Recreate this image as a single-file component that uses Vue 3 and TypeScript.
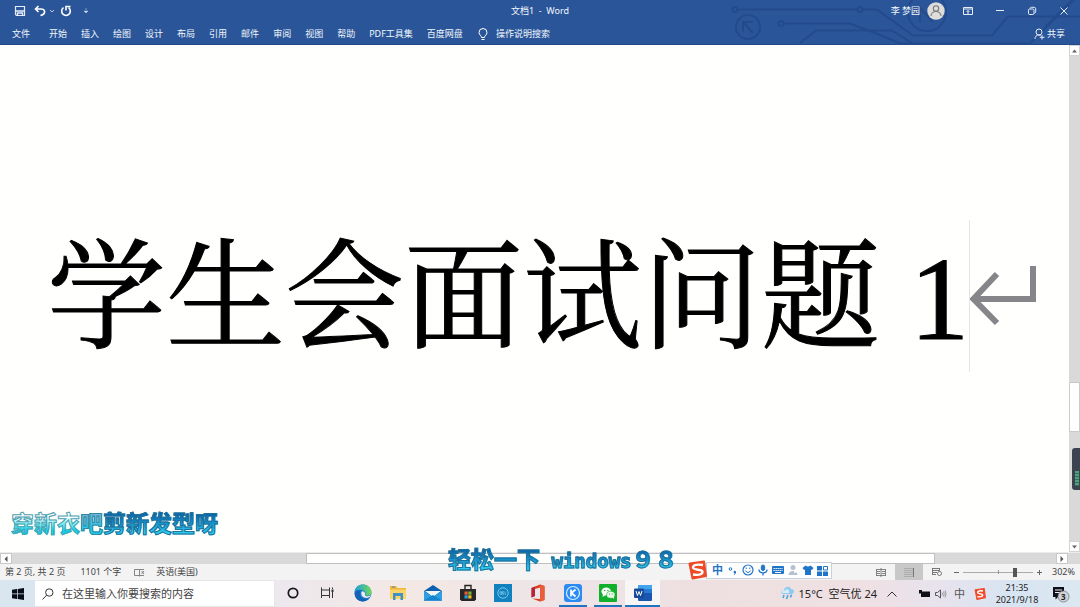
<script setup lang="ts">
import { ref } from 'vue'

const tabs: string[] = ['开始', '插入', '绘图', '设计', '布局', '引用', '邮件', '审阅', '视图', '帮助', 'PDF工具集', '百度网盘']
const zoom = ref(76)
const query = ref('')
</script>

<template>
  <div class="desktop">
    <header class="top">
      <svg class="circuit" viewBox="0 0 360 45" fill="none" stroke="#234a8c" stroke-width="2">
        <path d="M18 9.500H137M143 9.500H157L193 35.500H272L288 16.500H360M64 23.500H130L160 35L180 43.500H310L360 -6M80 43L96 30.500H172L192 43M325 27L352 0" />
        <circle cx="15" cy="9.500" r="2.500" /><circle cx="140" cy="9.500" r="2.500" /><circle cx="61" cy="23.500" r="2.500" />
        <circle cx="28" cy="27" r="12" /><path d="M23 32V22H33M23 22L33 33" />
        <circle cx="207" cy="12" r="19" /><path d="M200 22V8L213 22" />
      </svg>
      <div class="titlebar">
        <div class="quick">
          <button aria-label="保存"><svg width="12" height="12" viewBox="0 0 12 12"><path d="M1.500 1.500H10.500V10.500H2.500L1.500 9.500Z" fill="none" stroke="#e6edf8" stroke-width="1.200" /><path d="M2 6H10M3.500 10V8H8.500V10" fill="none" stroke="#e6edf8" stroke-width="1.400" /></svg></button>
          <button class="undo" aria-label="撤消"><svg width="12" height="12" viewBox="0 0 12 12" fill="none" stroke="#fff" stroke-width="1.600"><path d="M4.500 1L1.500 4L4.500 7M1.500 4H7.500C10 4 11 6 10.500 7.500C10 9.500 8.500 10 6.500 10.500" /></svg></button>
          <button class="more" aria-label="撤消选项"><svg width="4" height="4" viewBox="0 0 4 4"><path d="M0 1L2 3L4 1" fill="none" stroke="#b9cae6" /></svg></button>
          <button class="redo" aria-label="重复"><svg width="12" height="12" viewBox="0 0 12 12" fill="none" stroke="#fff" stroke-width="1.600"><path d="M3.500 2.700A4.300 4.300 0 1 0 8.500 2.700M6 5.500V1.500H10.500" /></svg></button>
          <button class="custom" aria-label="自定义快速访问工具栏"><svg width="4" height="6" viewBox="0 0 4 6"><path d="M1 1H3M0 3H4L2 5Z" fill="#c9d7ee" stroke="#c9d7ee" stroke-width=".5" /></svg></button>
        </div>
        <div class="doc-name">文档1&nbsp; -&nbsp; Word</div>
        <div class="account">
          <span>李 梦园</span>
          <svg width="18" height="18" viewBox="0 0 18 18"><circle cx="9" cy="9" r="8.700" fill="#dfddda" /><circle cx="9" cy="6.500" r="2.700" fill="none" stroke="#77797c" stroke-width="1.100" /><path d="M4 14C4 8 14 8 14 14" fill="none" stroke="#77797c" stroke-width="1.100" /></svg>
        </div>
        <div class="window-buttons">
          <button aria-label="功能区显示选项"><svg width="12" height="10" viewBox="0 0 12 10" fill="none" stroke="#e6edf8"><path d="M1.500 1.500H10.500V8.500H1.500ZM1.500 3H10.500M6 8V4.500M4.500 6L6 4.500L7.500 6" /></svg></button>
          <button aria-label="最小化"><svg width="10" height="10" viewBox="0 0 10 10"><path d="M1 4.500H9" stroke="#e6edf8" /></svg></button>
          <button aria-label="还原"><svg width="10" height="10" viewBox="0 0 10 10" fill="none" stroke="#e6edf8"><rect x="1.500" y="3" width="5.500" height="5.500" rx="1.200" /><path d="M3 2.500C3.200 1.500 3.600 1.300 4.500 1.300H7C8.300 1.300 8.700 2 8.700 3V5.500C8.700 6.500 8.400 7 7.500 7.200" /></svg></button>
          <button aria-label="关闭"><svg width="10" height="10" viewBox="0 0 10 10"><path d="M1.500 1.500L8.500 8.500M8.500 1.500L1.500 8.500" stroke="#e6edf8" /></svg></button>
        </div>
      </div>
      <nav class="ribbon">
        <button class="file">文件</button>
        <button v-for="tab in tabs" :key="tab">{{ tab }}</button>
        <button class="tell">
          <svg width="10" height="13" viewBox="0 0 10 13" fill="none" stroke="#fff"><path d="M3.500 9.500C3.500 7.500 1 7 1 4.500A4 4 0 0 1 9 4.500C9 7 6.500 7.500 6.500 9.500ZM3.500 11.500H6.500" /></svg>
          操作说明搜索
        </button>
        <button class="share">
          <svg width="11" height="12" viewBox="0 0 11 12" fill="none" stroke="#e6edf8"><circle cx="5" cy="4" r="3" /><path d="M1 11C1 8.500 2.500 7 5 7L6.500 7.500M8 7V11.500M5.800 9.300H10.500" /></svg>
          共享
        </button>
      </nav>
    </header>

    <div class="workspace">
      <main class="page">
        <h1>学生会面试问题 1</h1>
        <span class="caret"></span>
        <svg class="return" width="67" height="62" viewBox="0 0 67 62" fill="none" stroke="#85858a" stroke-width="6"><path d="M63 1V34H4M27 9L3.500 34L27 58" /></svg>
      </main>
      <div class="vscroll">
        <button aria-label="向上滚动"><svg width="5" height="4" viewBox="0 0 5 4"><path d="M0 3.500L2.500 .5L5 3.500Z" fill="#666" /></svg></button>
        <span class="v-before"></span><span class="v-thumb"></span><span class="v-after"></span>
        <button aria-label="向下滚动"><svg width="5" height="4" viewBox="0 0 5 4"><path d="M0 .5L2.500 3.500L5 .5Z" fill="#666" /></svg></button>
      </div>
    </div>

    <div class="hscroll">
      <button aria-label="向左滚动"><svg width="4" height="6" viewBox="0 0 4 6"><path d="M3.500 0L.5 3L3.500 6Z" fill="#555" /></svg></button>
      <span class="h-before"></span><span class="h-thumb"></span><span class="h-after"></span>
      <button aria-label="向右滚动"><svg width="4" height="6" viewBox="0 0 4 6"><path d="M.5 0L3.500 3L.5 6Z" fill="#555" /></svg></button>
    </div>

    <footer class="status">
      <span>第 2 页, 共 2 页</span>
      <span class="words">1101 个字</span>
      <svg class="proof" width="11" height="9" viewBox="0 0 11 9" fill="none" stroke="#777"><path d="M5 1.500H.5V7.500H5M5.500 1V8.500M6 1.500H10M6 7.500H10M7.500 3L10 6M10 3L7.500 6" stroke-width=".9" /></svg>
      <span>英语(美国)</span>
      <div class="views">
        <button aria-label="阅读视图"><svg width="12" height="9" viewBox="0 0 12 9" fill="none" stroke="#777"><path d="M1 1.500H11M1 7.500H11M1.500 1V8M6 0V9M10.500 1V8M2 3.500H5M2 5.500H5M7 3.500H10M7 5.500H10" stroke-width=".9" /></svg></button>
        <button class="selected" aria-label="页面视图"><svg width="12" height="11" viewBox="0 0 12 11" stroke="#a0a0a0"><path d="M1 1.500H10M1 3.500H10M1 5.500H10M1 7.500H10M1 9.500H10" stroke-width=".7" /><path d="M10.500 1V10" stroke="#777" /></svg></button>
        <button aria-label="Web 版式视图"><svg width="12" height="10" viewBox="0 0 12 10" fill="none" stroke="#777"><path d="M1 1.500H9M1 3.500H9M1 5.500H6M1 7.500H5M1.500 1V8M8.500 1V4" /><circle cx="8.500" cy="6.500" r="2" /></svg></button>
      </div>
      <button class="step" aria-label="缩小"><svg width="7" height="7" viewBox="0 0 7 7"><path d="M1 3.500H6" stroke="#666" /></svg></button>
      <input v-model.number="zoom" class="zoom" type="range" min="0" max="100" aria-label="显示比例">
      <button class="step" aria-label="放大"><svg width="7" height="7" viewBox="0 0 7 7"><path d="M1 3.500H6M3.500 1V6" stroke="#666" /></svg></button>
      <span class="percent">302%</span>
    </footer>

    <div class="taskbar">
      <button class="start" aria-label="开始菜单"><svg width="12" height="12" viewBox="0 0 12 12" fill="#080b18"><path d="M0 1.800L5 1V5.600H0ZM5.700 .9L12 0V5.600H5.700ZM0 6.300H5V11L0 10.200ZM5.700 6.300H12V12L5.700 11.100Z" /></svg></button>
      <label class="search">
        <svg width="12" height="12" viewBox="0 0 12 12" fill="none" stroke="#333"><circle cx="7.300" cy="4.500" r="3.700" /><path d="M4.600 7.200L.5 11.500" /></svg>
        <input v-model="query" type="text" placeholder="在这里输入你要搜索的内容" aria-label="搜索">
      </label>
      <div class="apps">
        <button aria-label="Cortana"><svg width="18" height="18" viewBox="0 0 18 18"><circle cx="9" cy="9" r="4.700" fill="none" stroke="#17171d" stroke-width="1.700" /></svg></button>
        <button aria-label="任务视图"><svg width="18" height="18" viewBox="0 0 18 18" fill="none" stroke="#333"><path d="M2.500 3.500V6H10.500V3.500M2.500 14V11.500H10.500V14M2.500 6V11.500M10.500 6V11.500M13.500 3.500V5M13.500 8V14" /><path d="M13.500 5.500V8" stroke-width="2" /></svg></button>
        <button aria-label="Edge"><svg width="18" height="18" viewBox="0 0 18 18">
          <defs><linearGradient id="edge-top" x1="0" x2="1"><stop offset="0" stop-color="#229dda" /><stop offset="1" stop-color="#6ddc55" /></linearGradient></defs>
          <circle cx="9" cy="9" r="8.500" fill="#1678cf" /><path d="M.6 8C1 -2 17-2 17.500 8.500C17.500 12 12 12.500 11 11C12.500 9 11 6.500 8 6C4.500 5.500 1.500 6 .6 8Z" fill="url(#edge-top)" /><path d="M6 9C5 14 11 17 15.500 14C11 20 1 18 .6 9.500C1 7 4 6 6 6.500Z" fill="#1263b5" /><path d="M7.500 8C8 6.500 11.500 7.500 11 10.500C10.500 12.500 14 13 17 11C16 13.500 13 14.500 10 13.500C7.500 12.500 6.800 10 7.500 8Z" fill="#f1e9eb" />
        </svg></button>
        <button aria-label="文件资源管理器"><svg width="18" height="18" viewBox="0 0 18 18"><path d="M1 2H7L8.500 4H17V15H1Z" fill="#f0b63c" /><path d="M1 5.500H17V15H1Z" fill="#fbd567" /><path d="M4 9H14V16H11.500V12H6.500V16H4Z" fill="#3f91c6" /><path d="M3 2.500H6V3.500H3Z" fill="#4a86a8" /></svg></button>
        <button aria-label="邮件"><svg width="18" height="18" viewBox="0 0 18 18"><path d="M0 7L9 1L18 7V16.500H0Z" fill="#0a5fae" /><path d="M1 7H17L9 13Z" fill="#eff7fb" /><path d="M0 7L9 13L18 7V16.500H0Z" fill="#2f9fe0" /><path d="M0 16.500L9 11L18 16.500Z" fill="#1685d0" /></svg></button>
        <button aria-label="应用商店"><svg width="18" height="18" viewBox="0 0 18 18"><path d="M6 6V1.500H12V6" fill="none" stroke="#222" stroke-width="1.400" /><path d="M1 5H17V15.500L15.500 17H2.500L1 15.500Z" fill="#292629" /><path d="M5.500 7.500H8.700V10.700H5.500Z" fill="#ed5b36" /><path d="M9.300 7.500H12.500V10.700H9.300Z" fill="#79b82e" /><path d="M5.500 11.300H8.700V14.500H5.500Z" fill="#25a1dc" /><path d="M9.300 11.300H12.500V14.500H9.300Z" fill="#f4ba21" /></svg></button>
        <button aria-label="Dell"><svg width="18" height="18" viewBox="0 0 18 18"><path d="M0 0H18V18H0Z" fill="#1182bf" /><circle cx="9" cy="9" r="5.200" fill="none" stroke="#77c6e8" /><path d="M6 7.700V10.300H7.500V7.700ZM10 7.700H8.500V10.300H10M8.500 9H10M11 7.500V10.300H12" fill="none" stroke="#85cbea" stroke-width=".7" /></svg></button>
        <button aria-label="Office"><svg width="18" height="18" viewBox="0 0 18 18"><path d="M2.500 4L11 .5L15.500 2V16L11 17.500L3 14.500L11 15V3.500L6 5V12L2.500 13.500Z" fill="#dc4022" /><path d="M11 .5L15.500 2V16L11 17.500Z" fill="#e85c3b" /><path d="M2.500 4L6 2.500V12L2.500 13.500Z" fill="#b6243c" /></svg></button>
        <button class="open" aria-label="酷狗音乐"><svg width="18" height="18" viewBox="0 0 18 18"><rect width="18" height="18" rx="3" fill="#2b8bf2" /><circle cx="9" cy="9" r="6.500" fill="none" stroke="#d7edff" stroke-width="1.200" /><path d="M7 5.500V12.500M11.500 5.500L7.500 9L11.500 12.500" fill="none" stroke="#fff" stroke-width="1.700" /></svg></button>
        <button class="open" aria-label="微信"><svg width="18" height="18" viewBox="0 0 18 18"><rect width="18" height="18" rx="1" fill="#12af2c" /><ellipse cx="7.200" cy="7.500" rx="4.800" ry="4" fill="#fff" /><path d="M4 10L3.500 13L6.500 11Z" fill="#fff" /><ellipse cx="11.800" cy="10.800" rx="4.200" ry="3.500" fill="#e9f7e9" stroke="#12af2c" stroke-width=".6" /><path d="M13 13.500L15 15L14.700 12.500Z" fill="#e9f7e9" /><g fill="#12af2c"><circle cx="5.700" cy="6.500" r=".7" /><circle cx="8.900" cy="6.500" r=".7" /><circle cx="10.500" cy="10" r=".6" /><circle cx="13.200" cy="10" r=".6" /></g></svg></button>
        <button class="open active" aria-label="Word"><svg width="18" height="18" viewBox="0 0 18 18"><rect x="4" y="1" width="14" height="16" rx="1" fill="#1a56b0" /><path d="M4 2Q4 1 5 1H17Q18 1 18 2V5H4Z" fill="#42a5ee" /><path d="M4 5H18V9H4Z" fill="#287bd4" /><rect y="4.500" width="10" height="9.500" rx="1" fill="#184a9b" /><path d="M2 7L3.500 11.500L5 7.500L6.500 11.500L8 7" fill="none" stroke="#fff" /></svg></button>
      </div>
      <div class="tray">
        <button class="weather">
          <svg width="15" height="15" viewBox="0 0 15 15"><path d="M3 8C0 7 1 4 4 4C5 0 10 0 11 3C15 3 15 8 11 8Z" fill="#8fcaf0" /><path d="M3 7C0 6 3 3 5 5C6 2 10 3 9 7Z" fill="#d8ecf7" /><path d="M4 9L3 12M8 9L6.500 13M11.500 8.500L10.500 11.500" stroke="#4aa7df" stroke-width="1.600" /></svg>
          15°C&nbsp; 空气优 24
        </button>
        <button class="chevron" aria-label="显示隐藏的图标"><svg width="10" height="6" viewBox="0 0 10 6"><path d="M.5 5.500L5 1L9.500 5.500" fill="none" stroke="#333" /></svg></button>
        <svg class="battery" width="12" height="8" viewBox="0 0 12 8"><path d="M0 0H3V1.500H11V7H2V3.500H0Z" fill="#101014" /></svg>
        <svg width="12" height="10" viewBox="0 0 12 10" fill="none" stroke="#555"><path d="M.5 3.500H2.500L5.500 1V9L2.500 6.500H.5Z" /><path d="M7 3.500Q8 5 7 6.500M8.500 2.500Q10 5 8.500 7.500M10 1.500Q12 5 10 8.500" stroke="#888" stroke-width=".8" /></svg>
        <span class="ime">中</span>
        <svg width="12" height="12" viewBox="0 0 20 20"><path d="M2 3L17 1L19 16L5 19Z" fill="#ef4c2c" stroke="#ef4c2c" stroke-width="2" stroke-linejoin="round" /><path d="M15 5C10 4 6 5 6 7.500C6 10.500 15 9 14.500 12C14 15 9 15 5.500 14.500" fill="none" stroke="#fff" stroke-width="2.300" /></svg>
        <time class="clock">21:35<br>2021/9/18</time>
        <button class="notice" aria-label="通知">
          <svg width="18" height="18" viewBox="0 0 18 18"><path d="M1 2H12V12H6L3.500 14.500V12H1Z" fill="#101018" /><path d="M3 5H10M3 7.500H10" stroke="#edf1f5" /><circle cx="11.500" cy="11.500" r="5.500" fill="#cfd3d8" stroke="#777b80" stroke-width=".8" /></svg>
          <b>3</b>
        </button>
      </div>
    </div>

    <div class="lyric first"><span class="sung">穿新衣</span><span class="singing">吧</span><span>剪新发型呀</span></div>
    <div class="lyric second"><span>轻松一下<span class="latin"> windows</span>９８</span></div>

    <div class="sogou">
      <svg class="logo" width="21" height="20" viewBox="0 0 20 20"><path d="M2 3.500L16.500 1.500L18.500 16L5 18.500Z" fill="#ef4a27" stroke="#ef4a27" stroke-width="2" stroke-linejoin="round" /><path d="M15.500 5C10 4 5.500 5 5.500 7.500C5.500 10.500 15.500 9 15 12C14.500 15 9 15 5.500 14.500" fill="none" stroke="#fff" stroke-width="2.400" /></svg>
      <div class="sogou-bar">
        <button class="lang">中</button>
        <button aria-label="标点"><svg width="11" height="11" viewBox="0 0 11 11"><circle cx="3.500" cy="4" r="1.300" fill="none" stroke="#1f74c8" /><circle cx="7.800" cy="7" r="1.200" fill="#1f74c8" /><path d="M8.600 7Q8.600 9 7 9.500" fill="none" stroke="#1f74c8" /></svg></button>
        <button aria-label="表情"><svg width="12" height="12" viewBox="0 0 12 12" fill="none" stroke="#1f74c8"><circle cx="6" cy="6" r="5" stroke-width="1.200" /><path d="M3.300 6.500Q6 10.500 8.700 6.500M4.200 3.500V5M7.800 3.500V5" /></svg></button>
        <button aria-label="语音"><svg width="12" height="12" viewBox="0 0 12 12" fill="none" stroke="#1f74c8"><rect x="4.300" y="1" width="3.400" height="5.500" rx="1.700" fill="#1f74c8" /><path d="M2 5.500C2 10 10 10 10 5.500M6 9V11.500" stroke-width="1.300" /></svg></button>
        <button aria-label="软键盘"><svg width="12" height="10" viewBox="0 0 12 10"><rect y="1" width="12" height="8" rx="1" fill="#1f74c8" /><path d="M1.500 3.500H10.500M1.500 5.500H10.500" stroke="#fff" stroke-dasharray="1.300 .7" /><path d="M3 7.500H9" stroke="#fff" /></svg></button>
        <button aria-label="登录"><svg width="12" height="12" viewBox="0 0 12 12" fill="#b4c1ce"><circle cx="6" cy="3.500" r="2.500" /><path d="M1.500 11C1.500 5.500 10.500 5.500 10.500 11Z" /><circle cx="8" cy="8" r="1" fill="#fff" /></svg></button>
        <button aria-label="皮肤"><svg width="12" height="12" viewBox="0 0 12 12"><path d="M3.500 1.500Q6 3.500 8.500 1.500L11.500 4L10 6L9 5.500V11H3V5.500L2 6L.5 4Z" fill="#1f74c8" /></svg></button>
        <button aria-label="工具箱"><svg width="11" height="11" viewBox="0 0 11 11" fill="#1f74c8"><path d="M0 1H5V5.500H0ZM0 6.500H5V11H0ZM6 6.500H11V11H6Z" /><path d="M6.500 1.500H10.500V5H6.500Z" fill="none" stroke="#1f74c8" /></svg></button>
      </div>
    </div>

    <div class="meter"><span></span></div>
  </div>
</template>

<style>
html, body { margin: 0; height: 100%; overflow: hidden; }
#app { height: 100%; }
</style>

<style scoped>
* { box-sizing: border-box; }
button { border: 0; padding: 0; margin: 0; background: transparent; font: inherit; color: inherit; display: flex; align-items: center; justify-content: center; white-space: nowrap; }
svg { display: block; flex: none; }
.desktop { position: relative; height: 100vh; display: flex; flex-direction: column; overflow: hidden; background: #fffffd; font-family: "Noto Sans", "Noto Sans CJK SC", sans-serif; font-size: 9px; line-height: 12px; color: #444; }

.top { position: relative; flex: none; height: 45px; background: #2a5699; color: #f2f6fc; border-bottom: 1px solid #24498a; }
.circuit { position: absolute; right: 0; top: 0; width: 360px; height: 45px; }
.titlebar { position: relative; height: 21px; display: flex; align-items: center; justify-content: flex-end; }
.quick { position: absolute; left: 14px; top: 5px; display: flex; align-items: center; }
.undo { margin-left: 8px; }
.more { margin-left: 4px; }
.redo { margin-left: 6px; }
.custom { margin-left: 12px; }
.doc-name { position: absolute; left: 0; right: 0; top: 5px; text-align: center; }
.account { display: flex; align-items: center; gap: 7px; margin-right: 3px; }
.window-buttons { display: flex; }
.window-buttons button { width: 32px; height: 21px; }
.window-buttons button:first-child { margin-left: 4px; }
.ribbon { position: relative; display: flex; align-items: center; gap: 14px; height: 24px; padding: 2px 15px 0 12px; }
.file { margin-right: 5px; }
.tell { gap: 8px; margin-left: 1px; }
.share { gap: 2px; margin-left: auto; }

.workspace { flex: 1; min-height: 0; display: flex; }
.page { flex: 1; min-width: 0; display: flex; align-items: center; padding-left: 47px; overflow: hidden; }
h1 { margin: 0; flex: none; font-family: "Liberation Serif", "Noto Serif CJK SC", "Noto Sans CJK SC", serif; font-size: 119px; line-height: 152px; font-weight: 400; color: #000; white-space: nowrap; -webkit-text-stroke: 1px #000; }
.caret { flex: none; width: 1px; height: 152px; margin-bottom: 6px; background: #e4e4e8; }
.return { margin-bottom: 6px; }
.vscroll { flex: none; width: 11px; display: flex; flex-direction: column; background: #d9d9da; }
.vscroll button { height: 11px; background: #fff; border: 1px solid #d4d4d4; }
.v-before { flex: 327; }
.v-thumb { flex: 48; background: #fff; border: 1px solid #cacaca; }
.v-after { flex: 109; }
.hscroll { flex: none; height: 12px; display: flex; padding-right: 12px; background: #d9d9da; border-top: 1px solid #ececec; }
.hscroll button { width: 12px; background: #fff; border: 1px solid #c8c8c8; }
.h-before { flex: 295; }
.h-thumb { flex: 628; background: #fffffd; border: 1px solid #c0c0c0; }
.h-after { flex: 121; }

.status { flex: none; height: 16px; display: flex; align-items: center; padding: 0 5px; background: #f3f3f3; white-space: nowrap; }
.words { margin-left: 15px; }
.proof { margin: 0 11px 0 13px; }
.views { display: flex; margin: 0 2px 0 auto; }
.views button { width: 28px; height: 16px; }
.views .selected { background: #c8c8c8; }
.step { width: 7px; height: 12px; }
.zoom { appearance: none; width: 70px; height: 12px; margin: 0 3px; background: linear-gradient(#999, #999) center / 1px 4px no-repeat, linear-gradient(#aaa, #aaa) center / 100% 1px no-repeat; }
.zoom::-webkit-slider-thumb { appearance: none; width: 4px; height: 9px; background: #555; }
.percent { margin-left: 9px; }

.taskbar { flex: none; height: 27px; display: flex; background: linear-gradient(90deg, #ece8ee 25%, #f4e8e4 38%, #eee5e8 50%, #eedfe0 66%, #efe0e3 80%, #e7e3ed 87%, #d7e4f2 94%, #dce8f0); color: #222; }
.start { flex: none; width: 35px; background: #d9e6f0; }
.search { flex: none; width: 240px; display: flex; align-items: center; gap: 8px; padding-left: 7px; background: #fff; border: 1px solid #e6e6e6; border-left: 0; }
.search input { flex: 1; min-width: 0; border: 0; padding: 0; outline: 0; background: transparent; font: inherit; font-size: 11px; color: #333; }
.search input::placeholder { color: #444; opacity: 1; }
.apps { display: flex; }
.apps button { width: 35px; border-bottom: 2px solid transparent; padding-top: 1px; }
.apps .open { background: linear-gradient(#1d74c0, #1d74c0) bottom / 28px 2px no-repeat; background-origin: border-box; }
.apps .active { background: #f8f5f6; border-bottom-color: #1d74c0; }
.tray { margin-left: auto; display: flex; align-items: center; padding-right: 10px; }
.weather { gap: 4px; font-size: 11px; }
.chevron { margin: 0 22px 0 10px; }
.battery { margin-right: 4px; }
.ime { margin: 0 9px 0 7px; font-size: 11px; color: #555; }
.clock { margin: 0 13px 0 9px; width: 44px; text-align: center; font-size: 9px; line-height: 12px; white-space: nowrap; }
.notice { position: relative; }
.notice b { position: absolute; left: 9px; top: 6px; font-size: 8px; line-height: 11px; }

.lyric { position: absolute; font-family: "Noto Sans CJK SC", sans-serif; font-size: 23px; line-height: 28px; font-weight: 700; white-space: pre; }
.lyric > span { color: transparent; background: linear-gradient(#0a68b0 30%, #1795d0 55%, #2bcbf0 80%); background-clip: text; -webkit-text-stroke: 1px #1f7099; }
.lyric > .sung { background: linear-gradient(#fff 35%, #7ff0f6 55%, #08d2ec 75%); background-clip: text; -webkit-text-stroke: 1px #4fa2b2; }
.lyric > .singing { background: linear-gradient(#6bb8d6 35%, #45c4e0 55%, #18ceec 75%); background-clip: text; -webkit-text-stroke: 1px #2f86a5; }
.first { left: 11px; bottom: 71px; }
.second { left: 448px; bottom: 32px; }
.latin { font-family: "DejaVu Sans Mono", monospace; font-size: 19px; }
.sogou { position: absolute; left: 687px; bottom: 27px; display: flex; align-items: center; }
.logo { position: relative; z-index: 1; }
.sogou-bar { display: flex; align-items: center; height: 17px; margin-left: -2px; padding: 0 1px 0 3px; background: #fff; border: 1px solid #c9d0da; }
.sogou-bar button { width: 15px; }
.lang { font-size: 11px; font-weight: 700; color: #1f74c8; }
.meter { position: absolute; right: 0; bottom: 117px; width: 8px; height: 42px; border-radius: 3px 0 0 3px; background: #3c4250; display: flex; align-items: flex-end; justify-content: flex-end; padding: 0 1px 4px 0; }
.meter span { width: 4px; height: 15px; background: repeating-linear-gradient(#4aa37a 0 2px, #35705d 2px 3px); }
</style>
